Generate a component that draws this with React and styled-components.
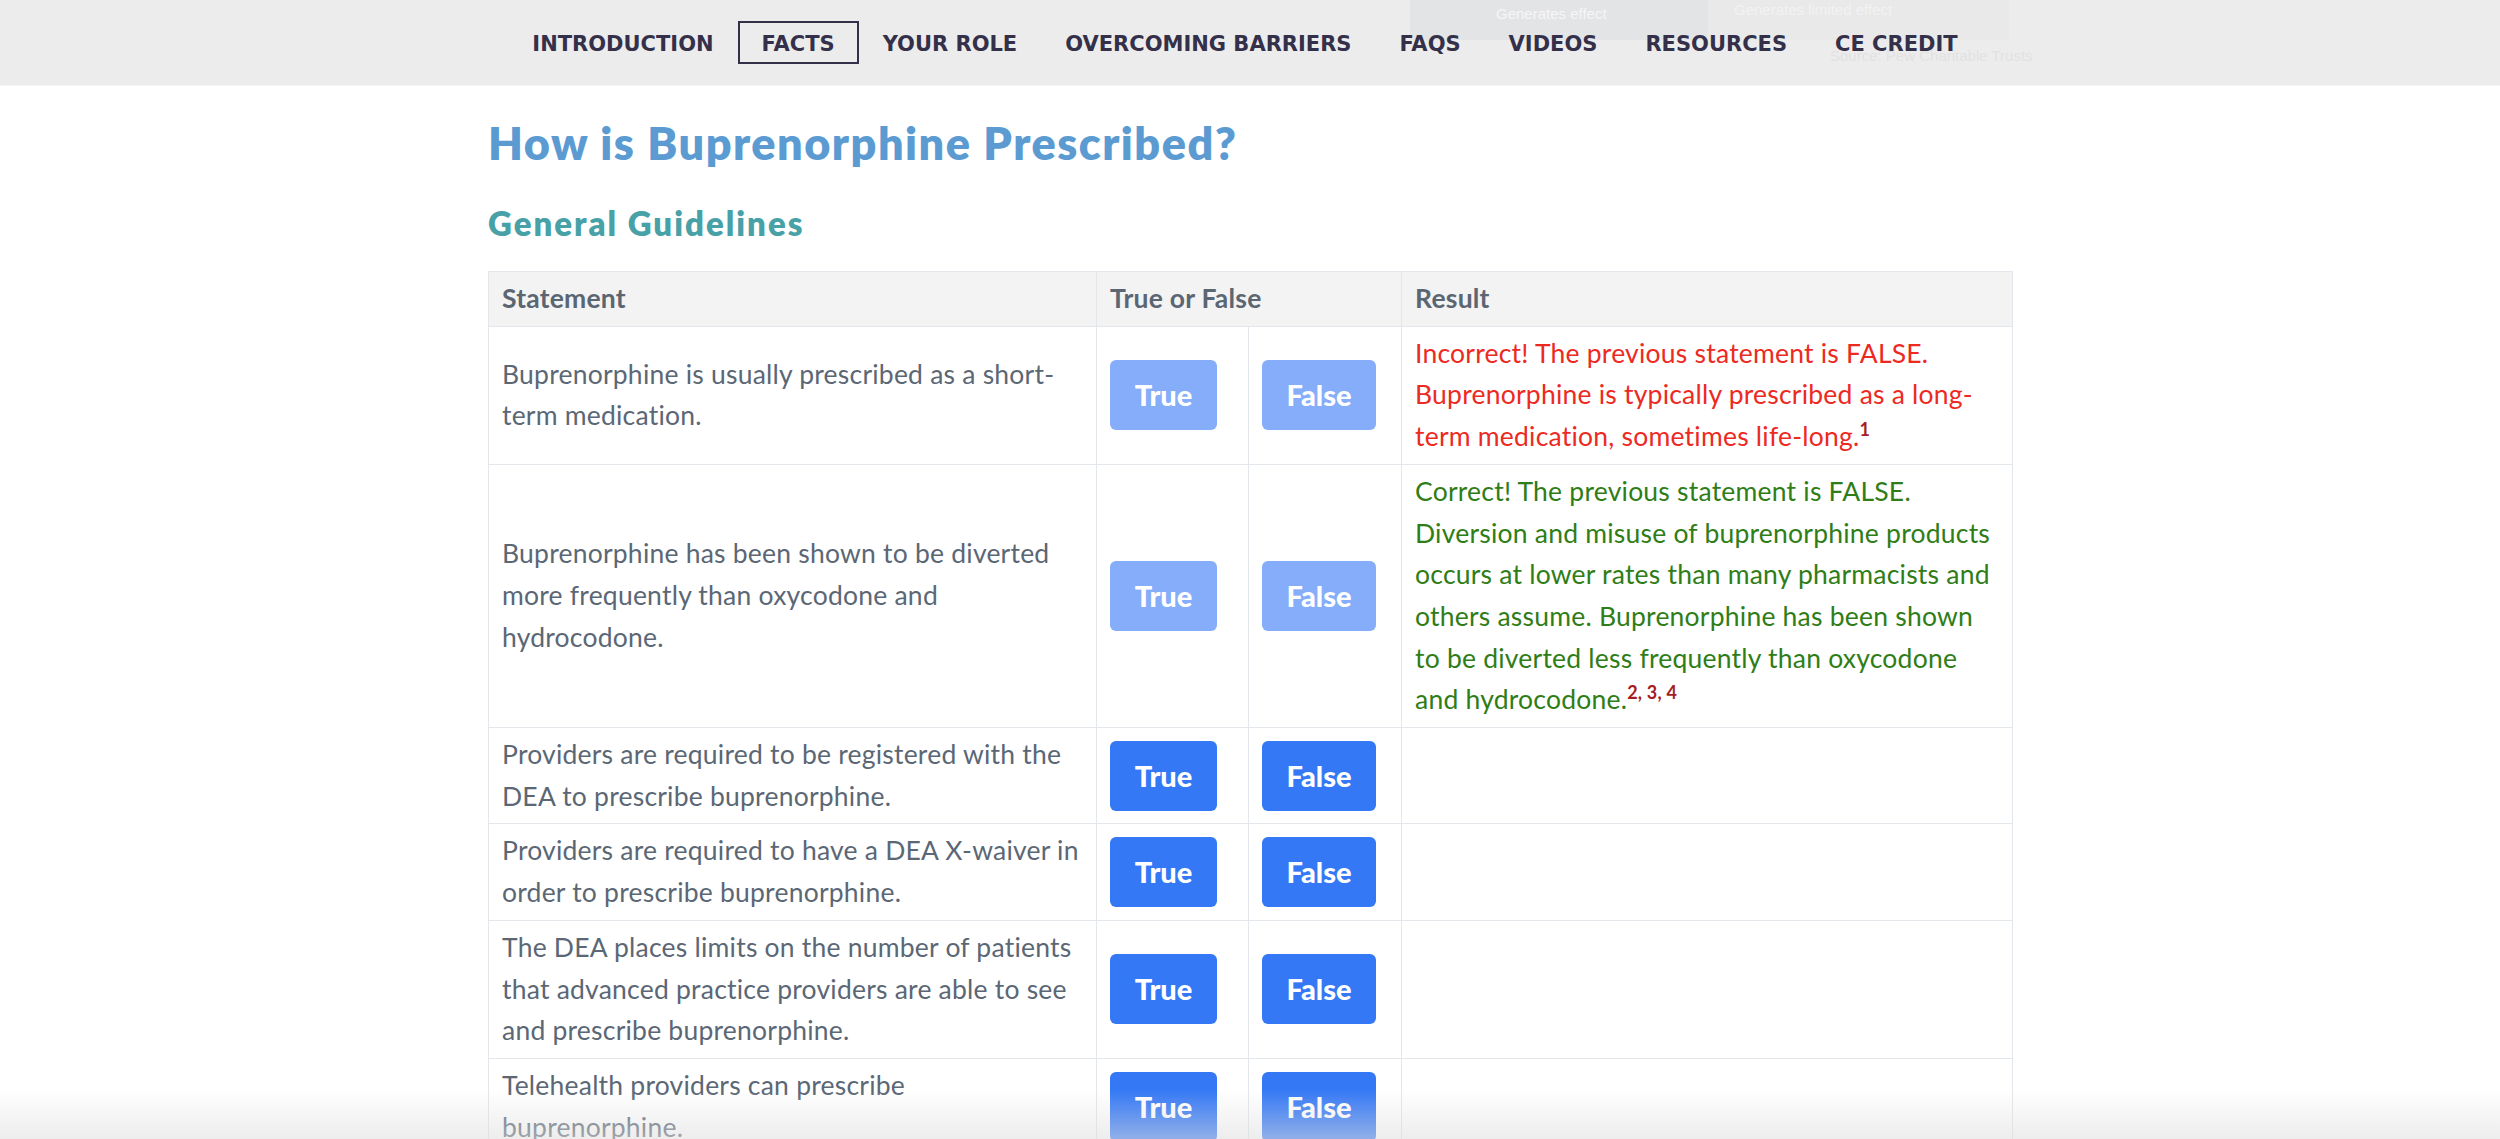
import styled, { createGlobalStyle } from "styled-components";

const GlobalStyle = createGlobalStyle`
  html, body {
    margin: 0;
    padding: 0;
    background: #ffffff;
  }
  body {
    font-family: Lato, "Noto Sans", sans-serif;
    color: #5b6775;
  }
`;

const NavBar = styled.nav`
  position: relative;
  height: 85px;
  background: #ececec;
  border-bottom: 1px solid #f4f4f4;
  overflow: hidden;
`;

const Ghost = styled.div`
  position: absolute;
  top: ${({ $top }) => $top}px;
  left: ${({ $left }) => $left}px;
  width: ${({ $w }) => ($w ? `${$w}px` : "auto")};
  height: ${({ $h }) => ($h ? `${$h}px` : "auto")};
  background: ${({ $bg }) => $bg || "transparent"};
  color: ${({ $color }) => $color || "#f6f6f6"};
  font-family: "Liberation Sans Narrow", "Liberation Sans", sans-serif;
  font-size: 15px;
  line-height: 1;
  white-space: nowrap;
`;

const NavList = styled.ul`
  position: relative;
  list-style: none;
  margin: 0 0 0 -10px;
  padding: 0;
  height: 100%;
  display: flex;
  align-items: center;
  justify-content: center;
`;

const NavItem = styled.li`
  font-family: "DejaVu Sans", Verdana, sans-serif;
  font-weight: bold;
  font-size: 21px;
  color: #34304a;
  padding: 9px 22px 6px;
  border: 2px solid ${({ $active }) => ($active ? "#34304a" : "transparent")};
`;

const Page = styled.main`
  width: 1524px;
  margin: 0 auto;
`;

const Title = styled.h1`
  margin: 30px 0 0;
  font-family: Lato, sans-serif;
  font-weight: 800;
  font-size: 45px;
  line-height: 54px;
  color: #5b9bd2;
  letter-spacing: 1.5px;
`;

const SubTitle = styled.h2`
  margin: 33px 0 0;
  font-family: Lato, sans-serif;
  font-weight: 800;
  font-size: 33px;
  line-height: 40px;
  color: #47a1a7;
  letter-spacing: 2px;
`;

const Table = styled.table`
  margin-top: 28px;
  width: 1524px;
  border-collapse: collapse;
  table-layout: fixed;
  font-size: 26.5px;
  line-height: 41.7px;
  letter-spacing: 0.22px;
`;

const HeadCell = styled.th`
  background: #f3f3f3;
  border: 1px solid #e3e6ea;
  padding: 6px 13px;
  text-align: left;
  font-weight: bold;
  color: #5b6673;
`;

const Cell = styled.td`
  border: 1px solid #e3e6ea;
  padding: 6px 13px;
  vertical-align: middle;
  color: ${({ $tone }) =>
    $tone === "bad" ? "#ec2a1f" : $tone === "good" ? "#2f7d16" : "#5b6775"};
`;

const AnswerButton = styled.button`
  font-family: Lato, sans-serif;
  font-weight: 900;
  font-size: 29px;
  line-height: 34px;
  color: #ffffff;
  border: none;
  border-radius: 6px;
  padding: 18px 16px;
  width: ${({ $wide }) => ($wide ? "114px" : "107px")};
  height: 70px;
  background: ${({ $disabled }) => ($disabled ? "#85adf9" : "#3478f6")};
  cursor: ${({ $disabled }) => ($disabled ? "default" : "pointer")};
`;

const Ref = styled.sup`
  font-size: 18px;
  font-weight: bold;
  color: #a51d22;
  line-height: 0;
`;

const BottomFade = styled.div`
  position: fixed;
  left: 0;
  right: 0;
  bottom: 0;
  height: 50px;
  pointer-events: none;
  background: linear-gradient(
    to bottom,
    rgba(232, 232, 232, 0),
    rgba(222, 222, 222, 0.55)
  );
`;

const NAV = [
  "INTRODUCTION",
  "FACTS",
  "YOUR ROLE",
  "OVERCOMING BARRIERS",
  "FAQS",
  "VIDEOS",
  "RESOURCES",
  "CE CREDIT",
];

const ROWS = [
  {
    text: "Buprenorphine is usually prescribed as a short-term medication.",
    answered: true,
    tone: "bad",
    result: (
      <>
        Incorrect! The previous statement is FALSE.
        <br />
        Buprenorphine is typically prescribed as a long-term medication,
        sometimes life-long.<Ref>1</Ref>
      </>
    ),
  },
  {
    text: "Buprenorphine has been shown to be diverted more frequently than oxycodone and hydrocodone.",
    answered: true,
    tone: "good",
    result: (
      <>
        Correct! The previous statement is FALSE.
        <br />
        Diversion and misuse of buprenorphine products occurs at lower rates
        than many pharmacists and others assume. Buprenorphine has been shown
        to be diverted less frequently than oxycodone and hydrocodone.
        <Ref>2, 3, 4</Ref>
      </>
    ),
  },
  {
    text: "Providers are required to be registered with the DEA to prescribe buprenorphine.",
  },
  {
    text: "Providers are required to have a DEA X-waiver in order to prescribe buprenorphine.",
  },
  {
    text: "The DEA places limits on the number of patients that advanced practice providers are able to see and prescribe buprenorphine.",
  },
  {
    text: "Telehealth providers can prescribe buprenorphine.",
  },
];

export default function App() {
  return (
    <>
      <GlobalStyle />
      <NavBar>
        <Ghost $top={0} $left={1410} $w={298} $h={40} $bg="#e3e4e6" />
        <Ghost $top={0} $left={1708} $w={301} $h={40} $bg="#e9e9e9" />
        <Ghost $top={6} $left={1496}>
          Generates effect
        </Ghost>
        <Ghost $top={2} $left={1734} $color="#f2f2f2">
          Generates limited effect
        </Ghost>
        <Ghost $top={48} $left={1830} $color="#e2e2e2">
          Source: Pew Charitable Trusts
        </Ghost>
        <NavList>
          {NAV.map((item) => (
            <NavItem key={item} $active={item === "FACTS"}>
              {item}
            </NavItem>
          ))}
        </NavList>
      </NavBar>
      <Page>
        <Title>How is Buprenorphine Prescribed?</Title>
        <SubTitle>General Guidelines</SubTitle>
        <Table>
          <colgroup>
            <col style={{ width: 608 }} />
            <col style={{ width: 152 }} />
            <col style={{ width: 153 }} />
            <col style={{ width: 611 }} />
          </colgroup>
          <thead>
            <tr>
              <HeadCell>Statement</HeadCell>
              <HeadCell colSpan={2}>True or False</HeadCell>
              <HeadCell>Result</HeadCell>
            </tr>
          </thead>
          <tbody>
            {ROWS.map((row) => (
              <tr key={row.text}>
                <Cell>{row.text}</Cell>
                <Cell>
                  <AnswerButton $disabled={row.answered}>True</AnswerButton>
                </Cell>
                <Cell>
                  <AnswerButton $wide $disabled={row.answered}>
                    False
                  </AnswerButton>
                </Cell>
                <Cell $tone={row.tone}>{row.result}</Cell>
              </tr>
            ))}
          </tbody>
        </Table>
      </Page>
      <BottomFade />
    </>
  );
}
